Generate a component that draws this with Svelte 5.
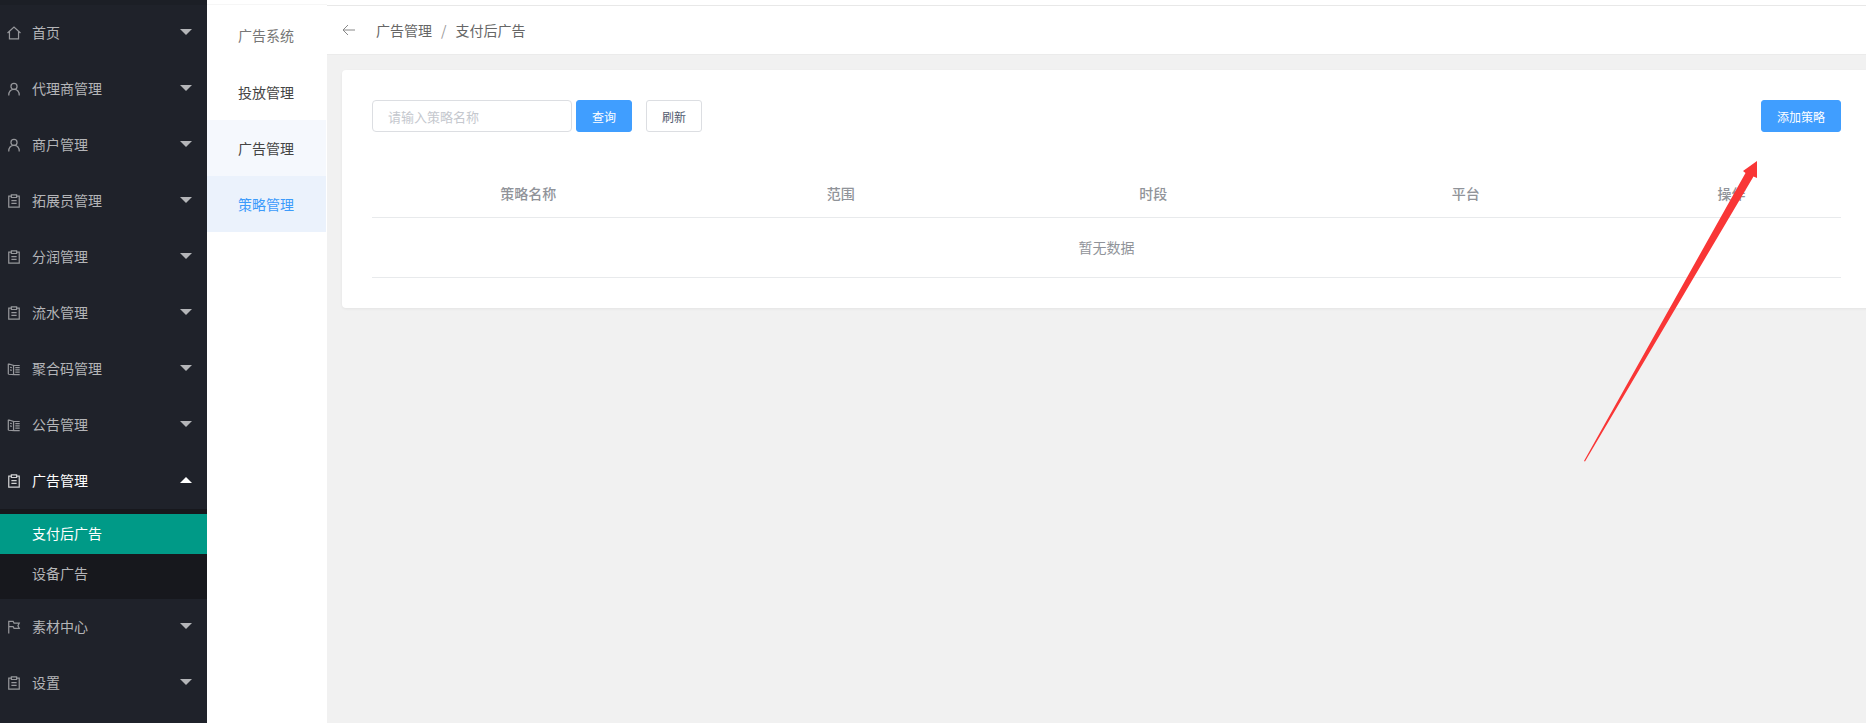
<script>
	const menus = [
		{ name: '首页', icon: 'home' },
		{ name: '代理商管理', icon: 'user' },
		{ name: '商户管理', icon: 'user' },
		{ name: '拓展员管理', icon: 'clip' },
		{ name: '分润管理', icon: 'clip' },
		{ name: '流水管理', icon: 'clip' },
		{ name: '聚合码管理', icon: 'book' },
		{ name: '公告管理', icon: 'book' },
		{ name: '广告管理', icon: 'clip', open: true, children: ['支付后广告', '设备广告'] },
		{ name: '素材中心', icon: 'flag' },
		{ name: '设置', icon: 'clip' }
	];
	const tabs = ['广告系统', '投放管理', '广告管理', '策略管理'];
	const columns = ['策略名称', '范围', '时段', '平台', '操作'];
</script>

<div class="page">
	<aside class="sidebar">
		{#each menus as menu}
			<div class="menu" class:open={menu.open}>
				<svg class="icon" viewBox="0 0 16 16" fill="none" stroke="currentColor" stroke-width="1.4">
					{#if menu.icon === 'home'}
						<path d="M0.6 8 8 1.2 15.400 8M2.800 6.400v8.200h10.400V6.400" />
					{:else if menu.icon === 'user'}
						<circle cx="8" cy="5" r="3.500" />
						<path d="M2 15.500c0-4 2.200-7 6-7s6 3 6 7" />
					{:else if menu.icon === 'clip'}
						<path d="M5 2.500H2v12.500h12V2.500h-3M5 1h6v3H5zM5 7.500h6M5 10.800h6" />
					{:else if menu.icon === 'book'}
						<path d="M1.500 2v12M1.500 2l6 2v10.500l-6-.5M7.500 4h7M7.500 14.500h7M9.500 6.500h5M9.500 9h5M9.500 11.500h5M3.500 6l2 .5M3.500 9l2 .5" />
					{:else}
						<path d="M2 15.500V1.500h5l1 2h6l-1.500 3 1.500 3H8l-1-2H2" />
					{/if}
				</svg>
				<span class="menu-name">{menu.name}</span>
				<span class="caret"></span>
			</div>
			{#if menu.children}
				<div class="submenu">
					{#each menu.children as child, i}
						<div class="sub" class:current={i === 0}>{child}</div>
					{/each}
				</div>
			{/if}
		{/each}
	</aside>

	<nav class="tabs">
		{#each tabs as tab, i}
			<div class="tab" class:first={i === 0} class:hover={i === 2} class:selected={i === 3}>{tab}</div>
		{/each}
	</nav>

	<main class="main">
		<header class="crumbs">
			<svg class="back" viewBox="0 0 14 12" fill="none" stroke="currentColor" stroke-width="1">
				<path d="M13 6H1M6 1 1 6l5 5" />
			</svg>
			<span>广告管理</span>
			<span class="slash">/</span>
			<span>支付后广告</span>
		</header>

		<section class="card">
			<div class="toolbar">
				<input class="search" placeholder="请输入策略名称" />
				<button class="btn primary">查询</button>
				<button class="btn refresh">刷新</button>
				<button class="btn primary add">添加策略</button>
			</div>
			<div class="thead">
				{#each columns as col}
					<div>{col}</div>
				{/each}
			</div>
			<div class="empty">暂无数据</div>
		</section>
	</main>

	<svg class="arrow" viewBox="0 0 1866 723">
		<path d="M1584 461 1745.500 173 1743 171 1757 161 1757 178 1753.500 176.500 1585 461.500z" fill="#f93636" />
	</svg>
</div>

<style>
	:global(body) {
		margin: 0;
	}

	.page {
		display: flex;
		width: 1866px;
		height: 723px;
		overflow: hidden;
		background: #f1f1f1;
		font-family: 'Noto Sans CJK SC', 'Noto Sans', sans-serif;
		font-size: 14px;
	}

	.sidebar {
		flex: 0 0 207px;
		padding-top: 5px;
		box-sizing: border-box;
		background: #1f222a;
		box-shadow: inset 0 5px 0 #1c1f26;
		color: #b4b5b8;
	}

	.menu {
		display: flex;
		align-items: center;
		height: 56px;
		padding-left: 7px;
		box-sizing: border-box;
	}

	.menu.open {
		color: #fff;
	}

	.icon {
		flex: none;
		width: 14px;
		height: 14px;
		opacity: 0.8;
	}

	.menu-name {
		flex: 1;
		margin-left: 11px;
		line-height: 1;
		position: relative;
		top: -1px;
	}

	.caret {
		width: 0;
		height: 0;
		margin-right: 15px;
		border-left: 6px solid transparent;
		border-right: 6px solid transparent;
		border-top: 6px solid #b4b5b8;
		position: relative;
		top: -1px;
	}

	.open .caret {
		border-top: 0;
		border-bottom: 6px solid #fff;
	}

	.submenu {
		padding: 5px 0;
		background: #17181d;
		color: #b4b5b8;
	}

	.sub {
		height: 40px;
		padding-left: 32px;
		line-height: 38px;
	}

	.sub.current {
		background: #009a87;
		color: #fff;
	}

	.tabs {
		flex: 0 0 120px;
		padding-top: 8px;
		box-sizing: border-box;
		background: #fff;
		box-shadow: inset 0 5px 0 -1px #fff, inset 0 5px 0 #f6f6f6;
	}

	.tab {
		height: 56px;
		margin-right: 1px;
		padding-left: 31px;
		line-height: 56px;
		color: #444;
	}

	.tab.first {
		color: #777;
		line-height: 54px;
	}

	.tab.hover {
		background: #f5f8fd;
	}

	.tab.selected {
		background: #ebf2fc;
		color: #3c9bfb;
	}

	.main {
		flex: 1;
		min-width: 0;
	}

	.crumbs {
		display: flex;
		align-items: center;
		height: 50px;
		padding-left: 15px;
		box-sizing: border-box;
		margin-top: 5px;
		background: #fff;
		border-top: 1px solid #e8e8e8;
		border-bottom: 1px solid #ebebeb;
		box-shadow: 0 -5px 0 #fff;
		color: #666;
		line-height: 1;
	}

	.back {
		width: 14px;
		height: 12px;
		margin-right: 20px;
		color: #888;
	}

	.slash {
		margin: 0 9px;
		color: #999;
	}

	.card {
		margin: 15px -4px 0 15px;
		height: 238px;
		padding: 30px 29px 0 30px;
		box-sizing: border-box;
		background: #fff;
		border-radius: 4px;
		box-shadow: 0 1px 3px rgba(0, 0, 0, 0.06);
	}

	.toolbar {
		display: flex;
		height: 32px;
	}

	.search {
		width: 200px;
		height: 32px;
		padding: 0 15px;
		box-sizing: border-box;
		border: 1px solid #dcdee2;
		border-radius: 4px;
		font: inherit;
		font-size: 13px;
		outline: none;
	}

	.search::placeholder {
		color: #c5c8ce;
	}

	.btn {
		width: 56px;
		height: 32px;
		margin-left: 4px;
		padding: 0;
		box-sizing: border-box;
		border: 1px solid #dcdee2;
		border-radius: 3px;
		background: #fff;
		color: #515a6e;
		font: inherit;
		font-size: 12px;
	}

	.primary {
		border-color: #409eff;
		background: #409eff;
		color: #fff;
	}

	.refresh {
		margin-left: 14px;
	}

	.add {
		width: 80px;
		margin-left: auto;
	}

	.thead {
		display: grid;
		grid-template-columns: repeat(4, 1fr) 219px;
		height: 86px;
		box-sizing: border-box;
		padding-top: 48px;
		border-bottom: 1px solid #e8eaec;
		color: #909399;
		text-align: center;
		line-height: 26px;
		font-weight: 500;
	}

	.empty {
		height: 60px;
		box-sizing: border-box;
		border-bottom: 1px solid #e8eaec;
		color: #909399;
		text-align: center;
		line-height: 58px;
	}

	.arrow {
		position: absolute;
		left: 0;
		top: 0;
		width: 1866px;
		height: 723px;
		pointer-events: none;
	}
</style>
